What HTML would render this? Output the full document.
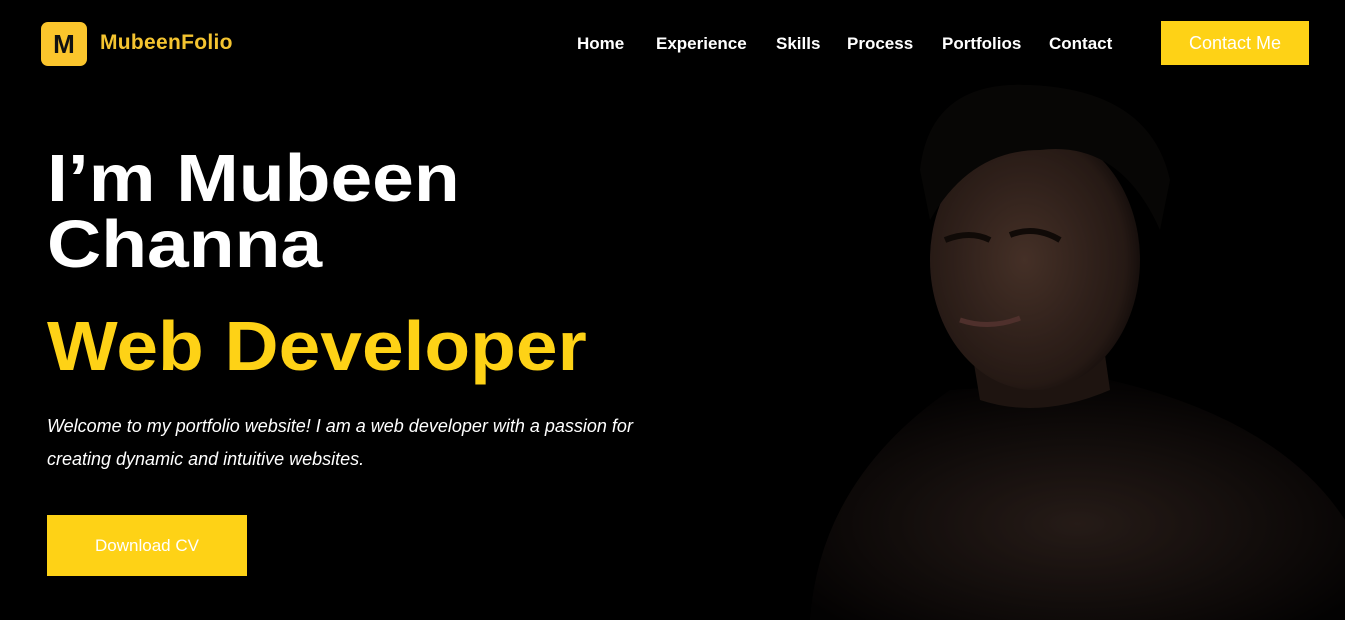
<!DOCTYPE html>
<html><head><style>
*{margin:0;padding:0;box-sizing:border-box}
html,body{width:1345px;height:620px;background:#000;overflow:hidden}
body{position:relative;font-family:"Liberation Sans",sans-serif;color:#fff}
.logo{position:absolute;left:41px;top:22px;width:46px;height:44px;background:#fbc52c;border-radius:7px;color:#111;font-weight:900;font-size:26px;text-align:center;line-height:44px}
.brand{position:absolute;left:100px;top:31px;color:#f4c430;font-size:21px;font-weight:bold;letter-spacing:.3px}
nav{position:absolute;top:34px;left:577px;font-size:17px;font-weight:bold}
nav span{position:absolute;white-space:nowrap}
.cta{position:absolute;left:1161px;top:21px;width:148px;height:44px;background:#fed216;color:#fff;font-size:18px;text-align:center;line-height:44px}
h1{position:absolute;left:47px;top:146px;font-size:67px;line-height:66px;font-weight:bold;white-space:nowrap;transform:scaleX(1.12);transform-origin:0 0}
h2{position:absolute;left:47px;top:306px;font-size:70px;font-weight:bold;color:#fed216;white-space:nowrap;transform:scaleX(1.07);transform-origin:0 0}
p{position:absolute;left:47px;top:410px;width:650px;font-size:18px;font-style:italic;line-height:33px}
.dl{position:absolute;left:47px;top:515px;width:200px;height:61px;background:#fed216;color:#fff;font-size:17px;text-align:center;line-height:61px}
.photo{position:absolute;left:780px;top:60px;width:565px;height:560px;opacity:.65}
</style></head><body>
<div class="photo">
<svg width="565" height="560" viewBox="0 0 565 560">
<defs>
<radialGradient id="s" cx=".5" cy=".6" r=".6"><stop offset="0" stop-color="#3a2a24"/><stop offset="1" stop-color="#060404"/></radialGradient>
<radialGradient id="f" cx=".45" cy=".5" r=".6"><stop offset="0" stop-color="#6a4a3c"/><stop offset=".8" stop-color="#3a2720"/><stop offset="1" stop-color="#120c0a"/></radialGradient>
</defs>
<path d="M30 560 Q40 420 170 330 L330 320 Q500 360 565 460 L565 560Z" fill="url(#s)"/>
<path d="M190 280 L200 340 Q260 360 330 330 L320 260Z" fill="#2e201a"/>
<ellipse cx="255" cy="200" rx="105" ry="130" fill="url(#f)"/>
<path d="M140 110 Q150 20 250 25 Q370 30 390 120 L380 170 Q340 80 260 90 Q190 90 150 160Z" fill="#0c0a09"/>
<path d="M165 180 Q190 170 210 180" stroke="#1a100c" stroke-width="6" fill="none"/>
<path d="M230 175 Q255 165 280 180" stroke="#1a100c" stroke-width="6" fill="none"/>
<path d="M180 260 Q210 270 240 258" stroke="#7a4a44" stroke-width="5" fill="none"/>
</svg>
</div>
<div class="logo">M</div>
<div class="brand">MubeenFolio</div>
<nav><span style="left:0">Home</span><span style="left:79px">Experience</span><span style="left:199px">Skills</span><span style="left:270px">Process</span><span style="left:365px">Portfolios</span><span style="left:472px">Contact</span></nav>
<div class="cta">Contact Me</div>
<h1>I’m Mubeen<br>Channa</h1>
<h2>Web Developer</h2>
<p>Welcome to my portfolio website! I am a web developer with a passion for creating dynamic and intuitive websites.</p>
<div class="dl">Download CV</div>
</body></html>
